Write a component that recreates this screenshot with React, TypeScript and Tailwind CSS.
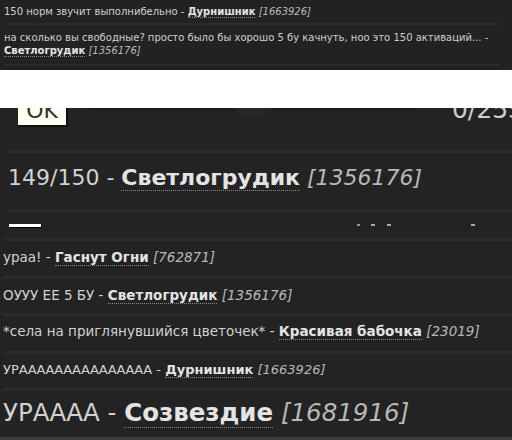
import React from 'react'

type Msg = { text: string; name: string; id: string }

function Line({ text, name, id }: Msg) {
  return (
    <>
      {text} - <span className="font-bold text-[#e4e4e4] border-b border-dotted border-[#8a8a8a]">{name}</span>{' '}
      <span className="italic text-[#b8b8b8]">[{id}]</span>
    </>
  )
}

const Sep = ({ className = '' }: { className?: string }) => (
  <div className={'h-[2px] bg-[#2b2b2b] ' + className} />
)

export default function App() {
  return (
    <div className="w-[512px] h-[440px] flex flex-col bg-white overflow-hidden" style={{ fontFamily: '"DejaVu Sans", Verdana, sans-serif' }}>
      {/* small top capture */}
      <div className="h-[70px] bg-[#222222] text-[#cfcfcf] text-[10px] leading-[13px] px-[4px] flex flex-col">
        <div className="h-[23px] flex items-center">
          <p><Line text="150 норм звучит выполнибельно" name="Дурнишник" id="1663926" /></p>
        </div>
        <Sep className="w-[496px]" />
        <div className="pt-[6px] pb-[5px] pr-[6px]">
          <p><Line text="на сколько вы свободные? просто было бы хорошо 5 бу качнуть, ноо это 150 активаций..." name="Светлогрудик" id="1356176" /></p>
        </div>
        <Sep className="w-[496px] mt-[2px]" />
      </div>

      {/* gap */}
      <div className="h-[38px] bg-white" />

      {/* zoomed capture */}
      <div className="flex-1 bg-[#232323] text-[#d2d2d2] flex flex-col overflow-hidden">
        <div className="h-[20px] flex">
          <div className="ml-[18px] w-[50px] h-[19px] bg-[#fffff2] border-r-2 border-b-2 border-[#111] flex justify-center overflow-hidden">
            <span className="text-[22px] leading-[22px] text-[#333] -mt-[8px]">OK</span>
          </div>
          <div className="ml-[22px] w-[327px] h-[3px] rounded-b-[10px] bg-[#1e1e1e] flex justify-center">
            <div className="w-[34px] h-[10px] rounded-b-full bg-[#272727]" />
          </div>
          <div className="ml-auto mr-[-12px] text-[25px] leading-[25px] text-[#cfcfcf] -mt-[11px]">0/255</div>
        </div>

        <Sep className="ml-[8px] mt-[22px] h-[3px]" />
        <div className="h-[56px] pl-[8px] flex items-center text-[22px]">
          <p className="-mt-[8px]"><Line text="149/150" name="Светлогрудик" id="1356176" /></p>
        </div>
        <Sep className="ml-[8px] h-[3px]" />
        <div className="h-[26px] flex items-center pl-[9px]">
          <div className="w-[32px] h-[3px] bg-white shadow-[1px_1px_0_#000]" />
          <div className="ml-[316px] w-[3px] h-[2px] bg-[#999]" />
          <div className="ml-[11px] w-[4px] h-[2px] bg-[#aaa]" />
          <div className="ml-[12px] w-[4px] h-[2px] bg-[#aaa]" />
          <div className="ml-[80px] w-[4px] h-[2px] bg-[#aaa]" />
        </div>
        <Sep className="ml-[3px] h-[3px]" />

        <div className="h-[35px] flex items-center pl-[3px] text-[13.5px]">
          <p className="-mt-[2px]"><Line text="ураа!" name="Гаснут Огни" id="762871" /></p>
        </div>
        <Sep className="ml-[3px] h-[3px]" />
        <div className="h-[34px] flex items-center pl-[3px] text-[13.5px]">
          <p className="-mt-[1px]"><Line text="ОУУУ ЕЕ 5 БУ" name="Светлогрудик" id="1356176" /></p>
        </div>
        <Sep className="ml-[3px] h-[3px]" />
        <div className="h-[35px] flex items-center pl-[3px] text-[13.5px]">
          <p className="-mt-[5px]"><Line text="*села на приглянувшийся цветочек*" name="Красивая бабочка" id="23019" /></p>
        </div>
        <Sep className="ml-[3px] h-[3px]" />
        <div className="h-[34px] flex items-center pl-[3px] text-[13px]">
          <p className="-mt-[2px]"><Line text="УРААААААААААААААА" name="Дурнишник" id="1663926" /></p>
        </div>
        <Sep className="ml-[3px] h-[3px]" />
        <div className="flex-1 flex items-center pl-[3px] text-[24.5px]">
          <p className="-mt-[2px]"><Line text="УРАААА" name="Созвездие" id="1681916" /></p>
        </div>
        <div className="h-[3px] bg-[#3a3a3a]" />
      </div>
    </div>
  )
}
